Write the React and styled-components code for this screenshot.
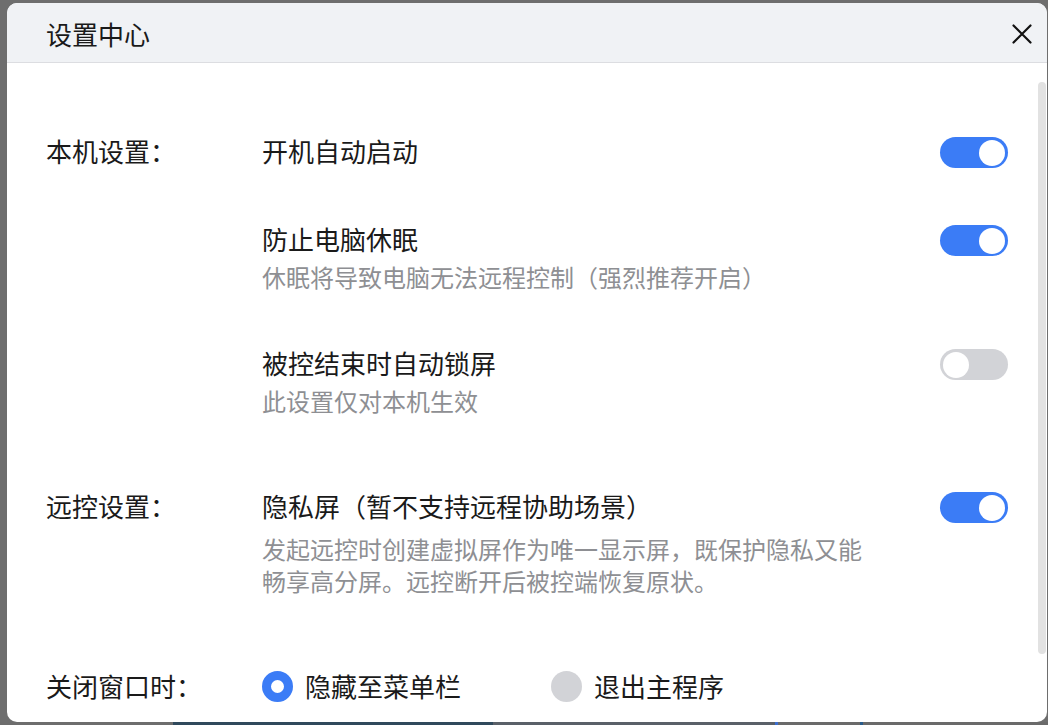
import styled, { createGlobalStyle } from 'styled-components';

const GlobalStyle = createGlobalStyle`
  html, body {
    margin: 0;
    padding: 0;
    background: #6e6e6e;
    overflow: hidden;
  }
  body {
    font-family: "Noto Sans CJK SC", "Noto Sans", sans-serif;
  }
`;

const Page = styled.div`
  display: flex;
  flex-direction: column;
  min-height: 100vh;
`;

const Window = styled.div`
  margin: 3px 1px 0 7px;
  height: 719px;
  background: #ffffff;
  border-radius: 10px;
  overflow: hidden;
  display: flex;
  flex-direction: column;
  position: relative;
`;

const Header = styled.div`
  height: 60px;
  flex-shrink: 0;
  background: #f0f2f5;
  border-bottom: 1px solid #dcdde1;
  display: flex;
  align-items: center;
  justify-content: space-between;
  padding: 2px 15px 0 39px;
  box-sizing: border-box;
`;

const Title = styled.div`
  font-size: 26px;
  color: #1a1a1a;
  line-height: 36px;
`;

const CloseButton = styled.button`
  border: none;
  background: none;
  padding: 0;
  width: 20px;
  height: 20px;
  display: flex;
  cursor: pointer;
`;

const Body = styled.div`
  flex: 1;
  position: relative;
  padding: 70px 39px 0;
  display: flex;
  flex-direction: column;
  gap: 71px;
`;

const Section = styled.div`
  display: grid;
  grid-template-columns: 216px 1fr;
`;

const Label = styled.div`
  font-size: 26px;
  line-height: 36px;
  color: #1a1a1a;
`;

const Items = styled.div`
  display: flex;
  flex-direction: column;
  gap: 52px;
`;

const Item = styled.div`
  display: flex;
  justify-content: space-between;
  align-items: flex-start;
`;

const Texts = styled.div`
  display: flex;
  flex-direction: column;
`;

const ItemTitle = styled.div`
  font-size: 26px;
  line-height: 36px;
  color: #1a1a1a;
`;

const Desc = styled.div`
  font-size: 24px;
  line-height: 32px;
  color: #8e8f93;
  margin-top: ${(p) => (p.$wide ? '9px' : '4px')};
  max-width: ${(p) => (p.$wide ? '610px' : 'none')};
`;

const Toggle = styled.span`
  flex-shrink: 0;
  margin-top: 4px;
  width: 68px;
  height: 31px;
  border-radius: 16px;
  background: ${(p) => (p.$on ? '#3b7cf6' : '#d2d3d7')};
  position: relative;

  &::after {
    content: '';
    position: absolute;
    top: 2.5px;
    left: ${(p) => (p.$on ? '39px' : '3px')};
    width: 26px;
    height: 26px;
    border-radius: 50%;
    background: #ffffff;
  }
`;

const RadioGroup = styled.div`
  display: flex;
  align-items: center;
  gap: 90px;
`;

const Option = styled.label`
  display: flex;
  align-items: center;
  gap: 12px;
  font-size: 26px;
  line-height: 36px;
  color: #1a1a1a;
`;

const RadioDot = styled.span`
  width: 31px;
  height: 31px;
  border-radius: 50%;
  box-sizing: border-box;
  background: ${(p) => (p.$checked ? '#ffffff' : '#d2d3d7')};
  border: ${(p) => (p.$checked ? '9.5px solid #3b7cf6' : 'none')};
`;

const ScrollThumb = styled.div`
  position: absolute;
  top: 19px;
  right: 1px;
  width: 8px;
  height: 572px;
  border-radius: 4px;
  background: #e2e2e2;
`;

const Strip = styled.div`
  height: 3px;
  display: flex;
`;

const Segment = styled.div`
  width: ${(p) => p.$w}px;
  background: ${(p) => p.$c};
`;

function Switch(props) {
  return <Toggle $on={props.on} />;
}

function App() {
  return (
    <>
      <GlobalStyle />
      <Page>
        <Window>
          <Header>
            <Title>设置中心</Title>
            <CloseButton>
              <svg width='20' height='20' viewBox='0 0 20 20'>
                <path d='M1.5 1.5 L18.5 18.5 M18.5 1.5 L1.5 18.5' stroke='#111' strokeWidth='2.2' strokeLinecap='round' />
              </svg>
            </CloseButton>
          </Header>
          <Body>
            <Section>
              <Label>本机设置：</Label>
              <Items>
                <Item>
                  <Texts>
                    <ItemTitle>开机自动启动</ItemTitle>
                  </Texts>
                  <Switch on />
                </Item>
                <Item>
                  <Texts>
                    <ItemTitle>防止电脑休眠</ItemTitle>
                    <Desc>休眠将导致电脑无法远程控制（强烈推荐开启）</Desc>
                  </Texts>
                  <Switch on />
                </Item>
                <Item>
                  <Texts>
                    <ItemTitle>被控结束时自动锁屏</ItemTitle>
                    <Desc>此设置仅对本机生效</Desc>
                  </Texts>
                  <Switch on={false} />
                </Item>
              </Items>
            </Section>
            <Section>
              <Label>远控设置：</Label>
              <Items>
                <Item>
                  <Texts>
                    <ItemTitle>隐私屏（暂不支持远程协助场景）</ItemTitle>
                    <Desc $wide>发起远控时创建虚拟屏作为唯一显示屏，既保护隐私又能畅享高分屏。远控断开后被控端恢复原状。</Desc>
                  </Texts>
                  <Switch on />
                </Item>
              </Items>
            </Section>
            <Section>
              <Label>关闭窗口时：</Label>
              <RadioGroup>
                <Option>
                  <RadioDot $checked />
                  隐藏至菜单栏
                </Option>
                <Option>
                  <RadioDot />
                  退出主程序
                </Option>
              </RadioGroup>
            </Section>
            <ScrollThumb />
          </Body>
        </Window>
        <Strip>
          <Segment $w={173} $c='#6d6d6d' />
          <Segment $w={320} $c='#30495c' />
          <Segment $w={282} $c='#5a6068' />
          <Segment $w={3} $c='#3c6fd0' />
          <Segment $w={82} $c='#6a6a6a' />
          <Segment $w={3} $c='#2a5b8a' />
          <Segment $w={185} $c='#6a6a6a' />
        </Strip>
      </Page>
    </>
  );
}

export default App;
